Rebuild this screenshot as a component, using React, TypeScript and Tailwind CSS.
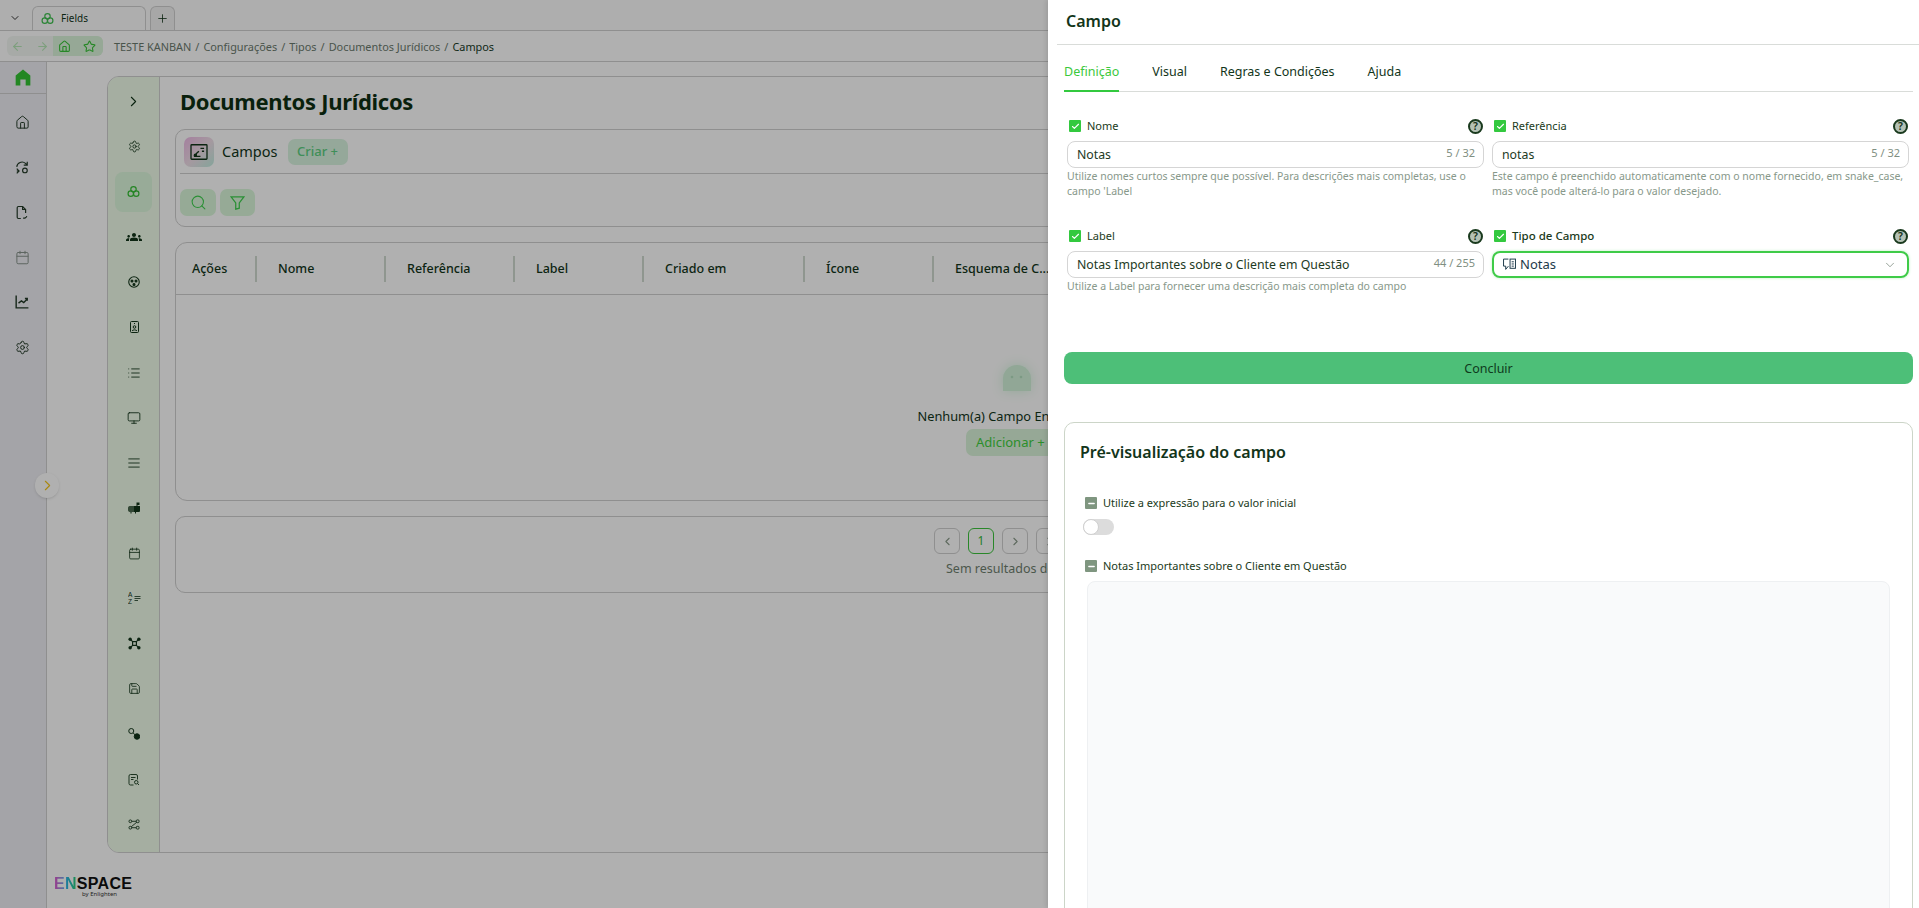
import React from 'react';
import {
  AlignJustify, ArrowLeft, ArrowRight, Calendar, Check, ChevronDown, ChevronLeft, ChevronRight,
  House, List, Minus, Monitor, Plus, Save, Search, Settings, Star,
} from 'lucide-react';
import { MdGroups } from 'react-icons/md';

const Clover = ({ size = 16 }: { size?: number }) => (
  <svg width={size} height={size} viewBox="0 0 24 24" fill="none" stroke="currentColor" strokeWidth="2.2">
    <circle cx="12" cy="8" r="5" />
    <circle cx="7" cy="16" r="5" />
    <circle cx="17" cy="16" r="5" />
  </svg>
);

const BallIcon = () => (
  <svg width="12" height="12" viewBox="0 0 24 24" fill="none" stroke="currentColor" strokeWidth="2.2">
    <circle cx="12" cy="12" r="10.5" />
    <circle cx="8" cy="10" r="2" fill="currentColor" />
    <circle cx="16" cy="10" r="2" fill="currentColor" />
    <circle cx="12" cy="17" r="2" fill="currentColor" />
  </svg>
);

const BadgeIcon = () => (
  <svg width="9" height="12" viewBox="0 0 18 24" fill="none" stroke="currentColor" strokeWidth="2">
    <rect x="1" y="1" width="16" height="22" rx="2" />
    <circle cx="9" cy="12" r="2.6" />
    <path d="M4 20c1-3 9-3 10 0M8 5h2" />
  </svg>
);

const MailboxIcon = () => (
  <svg width="12" height="12" viewBox="0 0 24 24" fill="currentColor">
    <path d="M5 8h9v12H5c-3 0-5-1-5-4v-4c0-3 2-4 5-4z" opacity="0.75" />
    <path d="M12 8h12v9c0 2-1 3-3 3h-9z" />
    <path d="M17 1h6v5h-4v4h-2zM5 20h2v3H5zM14 20h2v3h-2z" />
  </svg>
);

const AzIcon = () => (
  <svg width="13" height="14" viewBox="0 0 13 14" fill="none" stroke="currentColor">
    <text x="0" y="6" fontSize="6.5" fontFamily="Liberation Sans, sans-serif" fill="currentColor" stroke="none">A</text>
    <text x="0" y="13" fontSize="6.5" fontFamily="Liberation Sans, sans-serif" fill="currentColor" stroke="none">Z</text>
    <path d="M6.5 5.5h6M6.5 7.5h6M6.5 9.5h3.5" strokeWidth="0.8" />
  </svg>
);

const NetworkIcon = () => (
  <svg width="13" height="13" viewBox="0 0 24 24" fill="none" stroke="currentColor" strokeWidth="2.2">
    <rect x="8.5" y="8.5" width="7" height="7" />
    <path d="M4 4l5 5M20 4l-5 5M4 20l5-5M20 20l-5-5" />
    <g fill="currentColor" stroke="none">
      <circle cx="4" cy="4" r="3.2" /><circle cx="20" cy="4" r="3.2" /><circle cx="4" cy="20" r="3.2" /><circle cx="20" cy="20" r="3.2" />
    </g>
  </svg>
);

const NodesIcon = () => (
  <svg width="12" height="12" viewBox="0 0 24 24" fill="none" stroke="currentColor" strokeWidth="2">
    <circle cx="6.5" cy="6" r="5" />
    <path d="M10.5 10l4 4" />
    <circle cx="18" cy="17" r="5.5" fill="currentColor" />
  </svg>
);

const FileLensIcon = () => (
  <svg width="12" height="13" viewBox="0 0 24 24" fill="none" stroke="currentColor" strokeWidth="1.8">
    <path d="M11 23H5a3 3 0 0 1-3-3V5a3 3 0 0 1 3-3h11a3 3 0 0 1 3 3v7" />
    <path d="M6 8h9M6 12h5" />
    <circle cx="16.5" cy="17.5" r="3.5" />
    <path d="M19 20l3 3" />
  </svg>
);

const FlowIcon = () => (
  <svg width="12" height="11" viewBox="0 0 24 24" fill="none" stroke="currentColor" strokeWidth="1.9">
    <circle cx="4" cy="5" r="3" /><circle cx="4" cy="19" r="3" />
    <rect x="17" y="2" width="6" height="6" rx="2" />
    <rect x="17" y="16" width="6" height="6" rx="2" />
    <path d="M7 5h10M7 19h10M6 17 18 7" />
  </svg>
);

const SyncIcon = () => (
  <svg width="14" height="15" viewBox="0 0 24 24" fill="none" stroke="currentColor" strokeWidth="2">
    <path d="M3 11a9 9 0 0 1 15-6l3 3M21 2v6h-6" />
    <path d="M3 14l4 4-4 4M3 18h4" />
    <rect x="13" y="13" width="8" height="8" rx="4" />
  </svg>
);

const FileSyncIcon = () => (
  <svg width="12" height="15" viewBox="0 0 20 24" fill="none" stroke="currentColor" strokeWidth="2">
    <path d="M8 22H4a2 2 0 0 1-2-2V4a2 2 0 0 1 2-2h7l5 5v6" />
    <path d="M11 2v5h5M12 21c2 1 5 0 6-3" />
  </svg>
);

const ChartIcon = () => (
  <svg width="14" height="14" viewBox="0 0 24 24" fill="none" stroke="currentColor" strokeWidth="2.4">
    <path d="M2 1v21h21" />
    <path d="M6 14l5-4 4 3 6-6M17 6h4v4" />
  </svg>
);

const ChartTileIcon = () => (
  <svg width="18" height="16" viewBox="0 0 24 22" fill="none" stroke="currentColor" strokeWidth="1.8">
    <rect x="1" y="1" width="22" height="20" rx="1" />
    <path d="M5 17h9M7 17c0-3 2-5 5-7M14 6h5M16 10h3" />
    <circle cx="7" cy="15.5" r="1.5" />
  </svg>
);

const Ghost = () => (
  <svg width="28" height="27" viewBox="0 0 28 27" className="blur-[0.6px] drop-shadow-[0_0_6px_#d5f5dd]">
    <path d="M0 14a14 14 0 0 1 28 0v12H0z" fill="#d2f2da" />
    <circle cx="9" cy="12" r="1.3" fill="#b4e0bf" />
    <circle cx="18" cy="12" r="1.3" fill="#b4e0bf" />
  </svg>
);

const NotesIcon = () => (
  <svg width="13" height="13" viewBox="0 0 24 24" fill="none" stroke="currentColor" strokeWidth="1.8">
    <path d="M10 2H1v13h4v6l5-6" />
    <rect x="13" y="2" width="10" height="17" />
    <path d="M16 7h4M16 11h4M16 15h4" />
  </svg>
);

const HelpIcon = () => (
  <span className="flex h-[15px] w-[15px] items-center justify-center rounded-full border-2 border-[#1a3a1e] bg-[#b5c2b5] text-[10.5px] font-semibold leading-none text-[#12301a]">?</span>
);

const sidebarIcons = [
  <Settings key="a" size={13} strokeWidth={1.5} />,
  null,
  <MdGroups key="b" size={16} />,
  <BallIcon key="c" />,
  <BadgeIcon key="d" />,
  <List key="e" size={14} strokeWidth={1.5} />,
  <Monitor key="f" size={14} strokeWidth={1.5} />,
  <AlignJustify key="g" size={14} strokeWidth={1.5} />,
  <MailboxIcon key="h" />,
  <Calendar key="i" size={13} strokeWidth={1.5} />,
  <AzIcon key="j" />,
  <NetworkIcon key="k" />,
  <Save key="l" size={13} strokeWidth={1.5} />,
  <NodesIcon key="m" />,
  <FileLensIcon key="n" />,
  <FlowIcon key="o" />,
];

const columns = [
  { name: 'Ações', width: 'w-[81px]', pl: 'pl-[16px]' },
  { name: 'Nome', width: 'w-[129px]', pl: 'pl-[21px]' },
  { name: 'Referência', width: 'w-[129px]', pl: 'pl-[21px]' },
  { name: 'Label', width: 'w-[129px]', pl: 'pl-[21px]' },
  { name: 'Criado em', width: 'w-[161px]', pl: 'pl-[21px]' },
  { name: 'Ícone', width: 'w-[129px]', pl: 'pl-[21px]' },
  { name: 'Esquema de C...', width: 'w-[140px]', pl: 'pl-[21px]' },
];

const Background = () => (
  <div className="flex h-full flex-col bg-white text-[#12351a]">
    <div className="flex h-[31px] shrink-0 items-end border-b border-[#d0d0d0] bg-[#fdfdfd]">
      <ChevronDown size={12} className="mb-[6px] ml-[9px] w-[12px] text-[#333]" />
      <div className="ml-[11px] flex h-[24px] w-[114px] items-center gap-[7px] rounded-t-[6px] border border-b-0 border-[#d0d0d0] pl-[8px] text-[10px]">
        <span className="text-[#3fc04f]"><Clover size={13} /></span>
        <span>Fields</span>
      </div>
      <div className="ml-[4px] flex h-[24px] w-[25px] items-center justify-center rounded-t-[6px] border border-b-0 border-[#d0d0d0] bg-[#f2f2f2]">
        <Plus size={13} strokeWidth={1.5} />
      </div>
    </div>
    <div className="flex h-[31px] shrink-0 items-center border-b border-[#d0d0d0] pl-[7px] text-[10.9px] text-[#6b7a6e]">
      <div className="flex h-[20px] w-[96px] items-center rounded-[6px] bg-[#f2f7f2]">
        <ArrowLeft size={13} className="ml-[4px] text-[#b6e6b6]" />
        <ArrowRight size={13} className="ml-[12px] text-[#b6e6b6]" />
        <div className="ml-[4px] flex h-[20px] flex-1 items-center gap-[12px] rounded-r-[6px] bg-[#d9f3d9] pl-[5px] text-[#37c437]">
          <House size={13} />
          <Star size={13} />
        </div>
      </div>
      <div className="ml-[11px] flex gap-[4px] whitespace-nowrap pt-[2px]">
        <span>TESTE KANBAN</span><span>/</span><span>Configurações</span><span>/</span><span>Tipos</span><span>/</span>
        <span>Documentos Jurídicos</span><span>/</span><span className="text-[#173a1f]">Campos</span>
      </div>
    </div>
    <div className="flex min-h-0 flex-1">
      <div className="relative w-[47px] shrink-0 border-r border-[#cfcfcf] bg-[#eeeef3]">
        <div className="flex h-[32px] items-center justify-center border-b border-[#cfcfcf] pr-[1px] text-[#33c433]">
          <svg width="16" height="17" viewBox="0 0 24 24" fill="currentColor"><path d="M12 0 1 9v15h7v-9h8v9h7V9z" /></svg>
        </div>
        <div className="flex flex-col items-center pr-[2px] pt-[21px] text-[#233a28]">
          <div className="flex h-[45px] w-full items-start justify-center"><House size={15} strokeWidth={1.6} /></div>
          <div className="flex h-[45px] w-full items-start justify-center"><SyncIcon /></div>
          <div className="flex h-[45px] w-full items-start justify-center"><FileSyncIcon /></div>
          <div className="flex h-[45px] w-full items-start justify-center opacity-50"><Calendar size={15} strokeWidth={1.6} /></div>
          <div className="flex h-[45px] w-full items-start justify-center"><ChartIcon /></div>
          <div className="flex h-[45px] w-full items-start justify-center"><Settings size={15} strokeWidth={1.6} /></div>
        </div>
        <div className="absolute left-[35px] top-[411px] flex h-[25px] w-[24px] items-center justify-center rounded-full bg-white text-[#f5c518] shadow-sm">
          <ChevronRight size={17} strokeWidth={1.6} />
        </div>
      </div>
      <div className="relative min-w-0 flex-1 overflow-hidden">
        <div className="ml-[60px] mt-[14px] flex h-[777px] w-[1790px] overflow-hidden rounded-[12px] border border-[#cfcfcf]">
          <div className="flex w-[52px] shrink-0 flex-col items-center border-r border-[#cfcfcf] bg-[#effce9]">
            <div className="flex h-[47px] w-full items-center justify-center pt-[1px]"><ChevronRight size={17} strokeWidth={1.5} /></div>
            {sidebarIcons.map((icon, i) =>
              icon === null ? (
                <div key={i} className="my-[2.6px] flex h-[40px] w-[37px] shrink-0 items-center justify-center rounded-[8px] bg-[#dcf8dc] text-[#35c035]">
                  <Clover size={13} />
                </div>
              ) : (
                <div key={i} className="flex h-[45.2px] w-full shrink-0 items-center justify-center pl-[1px]">{icon}</div>
              ),
            )}
          </div>
          <div className="min-w-0 flex-1 pl-[15px] pr-[20px]">
            <h1 className="ml-[5px] mt-[9px] h-[30px] text-[22px] font-bold leading-[30px] tracking-[-0.3px] text-[#0e2f12]">Documentos Jurídicos</h1>
            <div className="mt-[13px] h-[98px] rounded-[10px] border border-[#cfcfcf] px-[4px]">
              <div className="flex h-[44px] items-center border-b border-[#cfcfcf]">
                <div className="ml-[4px] flex h-[30px] w-[30px] items-center justify-center rounded-[7px] bg-gradient-to-br from-[#eeb9e6] via-[#f0dde8] to-[#bfeee0] text-[#12351a]">
                  <ChartTileIcon />
                </div>
                <span className="ml-[8px] pt-[1px] text-[14.5px]">Campos</span>
                <span className="ml-[10px] flex h-[26px] w-[60px] items-center justify-center rounded-[7px] bg-[#d8f3e0] text-[13px] font-medium text-[#5ccf80]">Criar +</span>
              </div>
              <div className="mt-[15px] flex gap-[4px] text-[#3fd04f]">
                <span className="flex h-[27px] w-[36px] items-center justify-center rounded-[7px] bg-[#d9f7d9]"><Search size={17} strokeWidth={1.5} /></span>
                <span className="flex h-[27px] w-[35px] items-center justify-center rounded-[7px] bg-[#d9f7d9]">
                  <svg width="17" height="17" viewBox="0 0 24 24" fill="none" stroke="currentColor" strokeWidth="1.8"><path d="M3 4h18l-6.5 8.5V20l-5 1.5v-9z" /></svg>
                </span>
              </div>
            </div>
            <div className="mt-[15px] h-[259px] rounded-[12px] border border-[#cfcfcf]">
              <div className="flex h-[52px] items-center border-b border-[#cfcfcf] text-[12.5px] font-medium">
                {columns.map((c, i) => (
                  <div key={c.name} className={`${c.width} ${c.pl} flex h-[26px] items-center whitespace-nowrap pt-[2px] ${i < columns.length - 1 ? 'border-r-2 border-[#d0dad0]' : ''}`}>{c.name}</div>
                ))}
              </div>
              <div className="flex h-[205px] w-[1684px] flex-col items-center pt-[70px]">
                <div className="pr-[3px]"><Ghost /></div>
                <div className="mt-[14px] h-[20px] whitespace-nowrap text-[12.8px] leading-[20px]">Nenhum(a) Campo Encontrado(a)</div>
                <div className="mt-[3px] flex h-[27px] w-[104px] items-center rounded-[7px] bg-[#d9f3d9] pl-[10px] text-[13px] text-[#3fcf3f]">Adicionar +</div>
              </div>
            </div>
            <div className="mt-[15px] h-[77px] rounded-[10px] border border-[#cfcfcf]">
              <div className="ml-[758px] flex gap-[8px] pt-[11px] text-[#8a9a8a]">
                <span className="flex h-[26px] w-[26px] items-center justify-center rounded-[6px] border border-[#cfcfcf]"><ChevronLeft size={13} /></span>
                <span className="flex h-[26px] w-[26px] items-center justify-center rounded-[6px] border border-[#3cc43c] text-[12px] text-[#35b835]">1</span>
                <span className="flex h-[26px] w-[26px] items-center justify-center rounded-[6px] border border-[#cfcfcf]"><ChevronRight size={13} /></span>
                <span className="flex h-[26px] w-[26px] items-center justify-center rounded-[6px] border border-[#cfcfcf]"><ChevronRight size={13} /></span>
              </div>
              <div className="ml-[770px] mt-[6px] whitespace-nowrap text-[12.5px] text-[#6f806f]">Sem resultados de busca</div>
            </div>
          </div>
        </div>
        <div className="ml-[7px] mt-[24px] w-[90px] leading-none">
          <div className="flex font-['Liberation_Sans',sans-serif] text-[16px] font-bold leading-[13px] tracking-[0.3px]">
            <span className="bg-gradient-to-r from-[#e040c8] via-[#30b0f0] to-[#30d060] bg-clip-text text-transparent">EN</span>
            <span className="text-[#101010]">SPACE</span>
          </div>
          <div className="mt-[1px] pl-[28px] text-[6px] text-[#333]">by Enlighten</div>
        </div>
      </div>
    </div>
  </div>
);

const Box = ({ muted }: { muted?: boolean }) => (
  <span className={`flex h-[12px] w-[12px] shrink-0 items-center justify-center rounded-[1px] text-white ${muted ? 'bg-[#7f9680]' : 'bg-[#33c93f]'}`}>
    {muted ? <Minus size={9} strokeWidth={4} /> : <Check size={9} strokeWidth={3} />}
  </span>
);

const Field = ({ label, value, count, hint, h }: { label: string; value?: string; count?: string; hint?: string[]; h: string }) => (
  <div className={h}>
    <div className="flex h-[16px] items-center pl-[2px] pr-[1px]">
      <Box />
      <span className={`ml-[6px] flex-1 text-[#1a3a20] ${value ? 'text-[11px]' : 'text-[11.5px] font-medium'}`}>{label}</span>
      <HelpIcon />
    </div>
    {value ? (
      <div className="mt-[7px] flex h-[27px] items-center justify-between rounded-[8px] border border-[#d5d5d5] pl-[9px] pr-[8px] text-[12.3px] text-[#1d3a24]">
        <span className="pt-[2px]">{value}</span>
        <span className="mb-[2px] text-[11px] text-[#7f8f82]">{count}</span>
      </div>
    ) : (
      <div className="mt-[7px] flex h-[27px] items-center rounded-[8px] border-2 border-[#3fcb48] pl-[9px] pr-[10px] text-[13px] text-[#1d3a4a] shadow-[0_0_3px_#bdeec0]">
        <NotesIcon />
        <span className="ml-[4px] flex-1">Notas</span>
        <ChevronDown size={14} strokeWidth={1.2} className="text-[#6b7b6f]" />
      </div>
    )}
    {hint && (
      <div className="mt-[1px] text-[10.5px] leading-[15px] text-[#87988a]">
        {hint.map((line) => <div key={line} className="whitespace-nowrap">{line}</div>)}
      </div>
    )}
  </div>
);

const Drawer = () => (
  <div className="absolute bottom-0 right-0 top-0 w-[871px] overflow-hidden bg-white text-[#12351a] shadow-[-2px_0_4px_rgba(0,0,0,0.1)]">
    <div className="ml-[9px] flex h-[45px] items-center border-b border-[#d9dcd9] pb-[3px] pl-[9px] text-[16px] font-semibold">Campo</div>
    <div className="ml-[16px] mr-[6px] flex h-[47px] border-b border-[#d9dcd9] text-[12.5px]">
      <div className="flex h-[47px] items-center border-b-2 border-[#33c93f] pt-[9px] text-[#3cc83c]">Definição</div>
      <div className="ml-[33px] flex items-center pt-[9px]">Visual</div>
      <div className="ml-[33px] flex items-center pt-[9px]">Regras e Condições</div>
      <div className="ml-[33px] flex items-center pt-[9px]">Ajuda</div>
    </div>
    <div className="ml-[19px] mr-[10px] grid grid-cols-2 gap-x-[8px] pt-[26px]">
      <Field h="h-[110px]" label="Nome" value="Notas" count="5 / 32" hint={['Utilize nomes curtos sempre que possível. Para descrições mais completas, use o', "campo 'Label"]} />
      <Field h="h-[110px]" label="Referência" value="notas" count="5 / 32" hint={['Este campo é preenchido automaticamente com o nome fornecido, em snake_case,', 'mas você pode alterá-lo para o valor desejado.']} />
      <Field h="h-[124px]" label="Label" value="Notas Importantes sobre o Cliente em Questão" count="44 / 255" hint={['Utilize a Label para fornecer uma descrição mais completa do campo']} />
      <Field h="h-[124px]" label="Tipo de Campo" />
    </div>
    <div className="ml-[16px] mr-[6px] flex h-[32px] items-center justify-center rounded-[8px] bg-[#4dbf78] pt-[3px] text-[12.5px] text-[#0f3a1c]">Concluir</div>
    <div className="ml-[16px] mr-[6px] mt-[38px] h-[600px] rounded-[10px] border border-[#ccd5c8] pl-[15px] pr-[22px]">
      <div className="mt-[18px] text-[16px] font-semibold leading-[22px]">Pré-visualização do campo</div>
      <div className="mt-[32px] flex h-[16px] items-center pl-[5px]">
        <Box muted />
        <span className="ml-[6px] text-[11px] text-[#1a3a20]">Utilize a expressão para o valor inicial</span>
      </div>
      <div className="ml-[3px] mt-[8px] flex h-[16px] w-[31px] items-center rounded-full bg-[#dcdcdc]">
        <span className="h-[16px] w-[16px] rounded-full border border-[#d0d0d0] bg-white" />
      </div>
      <div className="mt-[23px] flex h-[16px] items-center pl-[5px]">
        <Box muted />
        <span className="ml-[6px] text-[11px] text-[#1a3a20]">Notas Importantes sobre o Cliente em Questão</span>
      </div>
      <div className="ml-[7px] mt-[7px] h-[400px] rounded-[8px] border border-[#eef0f2] bg-[#f9fafb]" />
    </div>
  </div>
);

const App: React.FC = () => {
  return (
    <div className="relative h-[908px] w-full overflow-hidden font-['Noto_Sans',sans-serif]">
      <Background />
      <div className="absolute inset-0 bg-black/[0.31]" />
      <Drawer />
    </div>
  );
};

export default App;
